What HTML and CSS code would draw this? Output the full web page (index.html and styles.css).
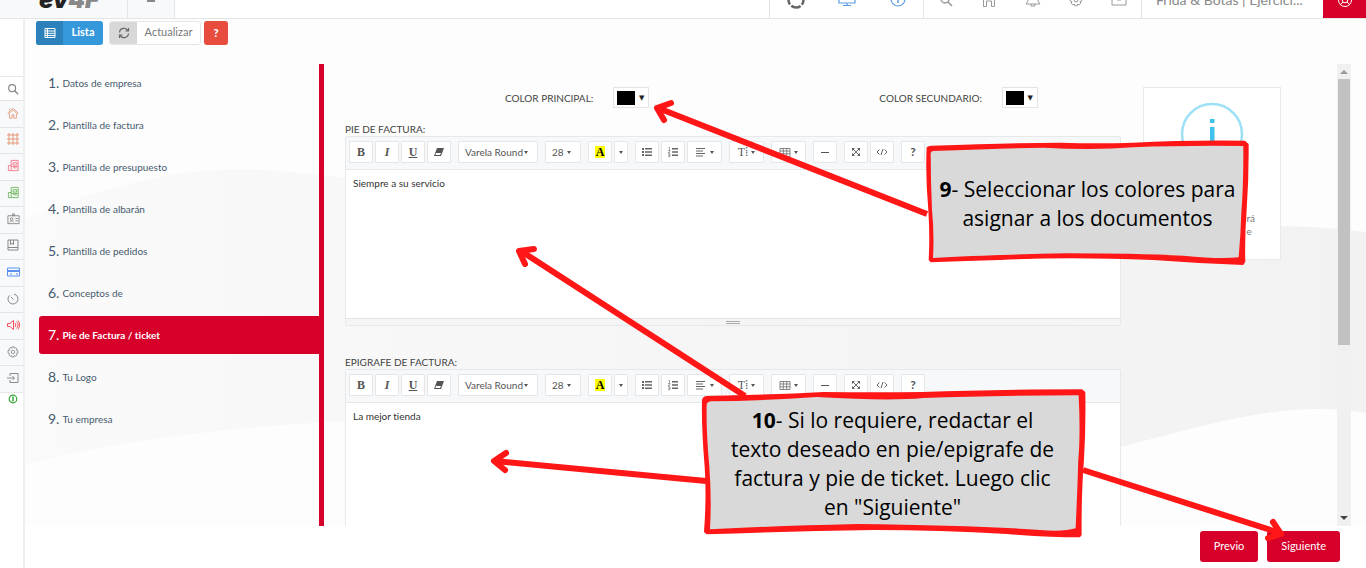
FILE: index.html
```html
<!DOCTYPE html>
<html lang="es">
<head>
<meta charset="utf-8">
<title>Configuración de documentos</title>
<link rel="stylesheet" href="styles.css">
</head>
<body>
<svg width="0" height="0" class="sprite" aria-hidden="true">
  <symbol id="eraser" viewBox="0 0 12 12"><path d="M4 2h7L8 10H1z" fill="#555"/><path d="M3 7h5l-1 2H2.400z" fill="#fff"/></symbol>
  <symbol id="ul" viewBox="0 0 12 12"><path d="M1 2h2v2H1zM1 5h2v2H1zM1 8h2v2H1zM4 2h7v1.500H4zM4 5.200h7v1.500H4zM4 8.400h7v1.500H4z" fill="#666"/></symbol>
  <symbol id="ol" viewBox="0 0 12 12"><path d="M5 2h6v1.500H5zM5 5.200h6v1.500H5zM5 8.400h6v1.500H5z" fill="#666"/><path d="M1.500 1.500h1v2.500M1 4.500h2v1l-2 1.500h2M1 8h2v1.300H1.500M3 9.300v1.400H1" fill="none" stroke="#777" stroke-width=".7"/></symbol>
  <symbol id="align" viewBox="0 0 12 12"><path d="M1 2.500h9M1 5h7M1 7.500h9M1 10h7" stroke="#666" stroke-width="1.200"/></symbol>
  <symbol id="grid" viewBox="0 0 12 12"><path d="M1 2.500h10v8H1zM1 5h10M1 7.800h10M4.300 2.500v8M7.700 2.500v8" fill="none" stroke="#777" stroke-width=".9"/></symbol>
  <symbol id="full" viewBox="0 0 12 12"><path d="M3 3l6 6M9 3L3 9" stroke="#666"/><path d="M2 2h3L2 5zM10 2v3L7 2zM2 10V7l3 3zM10 10H7l3-3z" fill="#666"/></symbol>
  <symbol id="code" viewBox="0 0 14 12"><path d="M4.500 3.500L2 6l2.500 2.500M9.500 3.500L12 6 9.500 8.500M8 3L6 9" fill="none" stroke="#666"/></symbol>
  <symbol id="gear" viewBox="0 0 14 14"><path d="M5.800 1h2.400l.4 1.700 1.500-.9 1.700 1.700-.9 1.500 1.800.5v2.700l-1.800.5.9 1.600-1.700 1.600-1.500-.9-.4 1.800H5.800l-.5-1.800-1.500.9-1.700-1.600.9-1.600L1.200 8V5.500L3 5l-.9-1.500 1.700-1.700 1.500.9z" fill="none" stroke="currentColor"/><circle cx="7" cy="6.900" r="2" fill="none" stroke="currentColor"/></symbol>
  <symbol id="doc" viewBox="0 0 14 14"><path d="M4.500 1.500h7.500v11H1.500V7h3zM4.500 7v5.500M6.500 4h4v2.500h-4zM6.500 9.500h4M4.500 8h7.500" fill="none" stroke="currentColor"/></symbol>
  <symbol id="search" viewBox="0 0 14 14"><circle cx="6" cy="6" r="4" fill="none" stroke="currentColor" stroke-width="1.400"/><path d="M9 9l4 4" stroke="currentColor" stroke-width="1.600"/></symbol>
  <symbol id="home" viewBox="0 0 14 14"><path d="M1 7l6-5.500L13 7l-1 1-5-4.600L2 8zM3 8v5h3V9h2v4h3V8M3 4V2" fill="none" stroke="currentColor"/></symbol>
</svg>

<header class="topbar">
  <a class="brand" href="#"><span>ev</span><span class="brand-light">4F</span></a>
  <button class="burger" aria-label="Menú"><i></i></button>
  <div class="tools tools-a">
    <a href="#" aria-label="Estado"><svg viewBox="0 0 20 20" width="20" height="20"><circle cx="10" cy="10" r="7.500" fill="none" stroke="#666" stroke-width="2.500" stroke-dasharray="10 1.780" stroke-dashoffset="5"/></svg></a>
    <a href="#" aria-label="Pantalla"><svg viewBox="0 0 18 18" width="18" height="18"><path d="M1 2h16v10H1zM9 12v2M5 14.500h8" fill="none" stroke="#5a9be6" stroke-width="1.200"/></svg></a>
    <a href="#" aria-label="Información"><svg viewBox="0 0 18 18" width="18" height="18"><circle cx="9" cy="8" r="7" fill="none" stroke="#5a9be6" stroke-width="1.200"/><path d="M9 4v8" stroke="#5a9be6" stroke-width="1.500"/></svg></a>
  </div>
  <div class="tools tools-b">
    <a href="#" aria-label="Buscar"><svg width="14" height="14"><use href="#search"/></svg></a>
    <a href="#" aria-label="Inicio"><svg viewBox="0 0 14 14" width="14" height="14"><path d="M1.500 6L7 1l5.500 5v7.500h-3V8h-5v5.500h-3z" fill="none" stroke="currentColor"/></svg></a>
    <a href="#" aria-label="Avisos"><svg viewBox="0 0 16 16" width="16" height="16"><path d="M1 12h14l-2-3V5a5 5 0 0 0-10 0v4zM6 12v2h4v-2" fill="none" stroke="currentColor"/></svg></a>
    <a href="#" aria-label="Ajustes"><svg width="14" height="14"><use href="#gear"/></svg></a>
    <a href="#" aria-label="Archivo"><svg viewBox="0 0 16 14" width="16" height="14"><path d="M1 1h14v11H1zM1 4h14M6 7h4" fill="none" stroke="currentColor"/></svg></a>
  </div>
  <a class="account" href="#">Frida &amp; Botas | Ejercici...</a>
  <button class="help" aria-label="Soporte"><svg viewBox="0 0 16 16" width="16" height="16"><g fill="none" stroke="#fff"><circle cx="8" cy="8" r="6.500"/><circle cx="8" cy="8" r="2.800"/><path d="M3.400 3.400L6 6M12.600 3.400L10 6M3.400 12.600L6 10M12.600 12.600L10 10"/></g></svg></button>
</header>

<div class="frame">
  <nav class="rail" aria-label="Secciones">
    <a class="rail-search" href="#" aria-label="Buscar"><svg width="12" height="12"><use href="#search"/></svg></a>
    <div class="rail-list">
      <a class="orange" href="#" aria-label="Inicio"><svg width="12" height="12"><use href="#home"/></svg></a>
      <a class="orange" href="#" aria-label="Módulos"><svg viewBox="0 0 12 12" width="12" height="12"><g fill="none" stroke="currentColor"><path d="M1 1h2v2H1zM5 1h2v2H5zM9 1h2v2H9zM1 5h2v2H1zM5 5h2v2H5zM9 5h2v2H9zM1 9h2v2H1zM5 9h2v2H5zM9 9h2v2H9z"/></g></svg></a>
      <a class="pink" href="#" aria-label="Compras"><svg width="13" height="13"><use href="#doc"/></svg></a>
      <a class="green" href="#" aria-label="Ventas"><svg width="13" height="13"><use href="#doc"/></svg></a>
      <a href="#" aria-label="Contactos"><svg viewBox="0 0 14 12" width="13" height="12"><path d="M1 2.500h12v8.500H1zM6 .5h2v2H6zM9 5.500h3M9 8h3M3 9.500c0-2 4-2 4 0" fill="none" stroke="currentColor"/><circle cx="5" cy="6" r="1.400" fill="none" stroke="currentColor"/></svg></a>
      <a href="#" aria-label="Libros"><svg viewBox="0 0 12 12" width="12" height="12"><path d="M1 1h10v10H1zM1 8.500h10M3.500 1v4.500L5 4.300l1.500 1.200V1" fill="none" stroke="currentColor"/></svg></a>
      <a class="blue" href="#" aria-label="Banco"><svg viewBox="0 0 13 10" width="13" height="10"><path d="M.5 1h12v8H.5zM3 7h2M9 7h2" fill="none" stroke="currentColor"/><path d="M.5 3h12v2H.5z" fill="currentColor"/></svg></a>
      <a href="#" aria-label="Tiempo"><svg viewBox="0 0 12 12" width="12" height="12"><path d="M7 1.100A5 5 0 1 1 2.500 2.400M6.500 6.500L4 4" fill="none" stroke="currentColor"/></svg></a>
      <a class="red" href="#" aria-label="Campañas"><svg viewBox="0 0 13 12" width="13" height="12"><path d="M.5 4.500H3l3.500-3v9L3 7.500H.5zM8 4c1 1 1 3 0 4M9.500 2.500c2 2 2 5 0 7M11 1.500c2 3 2 6 0 9" fill="none" stroke="currentColor"/></svg></a>
      <a href="#" aria-label="Ajustes"><svg width="12" height="12"><use href="#gear"/></svg></a>
      <a href="#" aria-label="Salir"><svg viewBox="0 0 12 12" width="12" height="12"><path d="M3 4V1.500h8v9H3V8M0 6h7M5.500 4l2 2-2 2" fill="none" stroke="currentColor"/></svg></a>
    </div>
    <a class="rail-power" href="#" aria-label="Estado"><svg viewBox="0 0 10 10" width="10" height="10"><circle cx="5" cy="5" r="3.800" fill="none" stroke="#36a336" stroke-width="1.200"/><path d="M5 2.500v5" stroke="#36a336" stroke-width="1.400"/></svg></a>
  </nav>

  <div class="page">
    <svg class="waves" viewBox="25 19 1341 549" preserveAspectRatio="none" aria-hidden="true">
      <defs><linearGradient id="wave"><stop offset="0" stop-color="#fafafa"/><stop offset=".3" stop-color="#f7f7f7"/><stop offset="1" stop-color="#f2f2f2"/></linearGradient></defs>
      <path d="M25 219C100 188 170 169 245 169C560 182 800 340 1120 247C1200 224 1290 222 1366 232V413C1290 401 1230 418 1121 447C900 510 600 400 345 421C220 428 120 440 25 465z" fill="url(#wave)"/>
    </svg>
    <div class="actions">
      <button class="action action-blue"><span class="action-icon"><svg viewBox="0 0 12 12" width="12" height="12"><path d="M1 1.500h10v9H1zM1 4h10M1 6.300h10M1 8.500h10M3.500 1.500v9" fill="none" stroke="#fff"/></svg></span><span class="action-text">Lista</span></button>
      <button class="action action-light"><span class="action-icon"><svg viewBox="0 0 12 12" width="12" height="12"><path d="M1.500 5.500a4.500 4.500 0 0 1 8.500-1.700M10.500 1v3h-3M10.500 6.500a4.500 4.500 0 0 1-8.500 1.700M1.500 11V8h3" fill="none" stroke="#666" stroke-width="1.200"/></svg></span><span class="action-text">Actualizar</span></button>
      <button class="action action-help">?</button>
    </div>

    <div class="wizard">
      <ol class="steps">
        <li><a href="#"><b>1.</b> Datos de empresa</a></li>
        <li><a href="#"><b>2.</b> Plantilla de factura</a></li>
        <li><a href="#"><b>3.</b> Plantilla de presupuesto</a></li>
        <li><a href="#"><b>4.</b> Plantilla de albarán</a></li>
        <li><a href="#"><b>5.</b> Plantilla de pedidos</a></li>
        <li><a href="#"><b>6.</b> Conceptos de</a></li>
        <li><a class="current" href="#" aria-current="step"><b>7.</b> Pie de Factura / ticket</a></li>
        <li><a href="#"><b>8.</b> Tu Logo</a></li>
        <li><a href="#"><b>9.</b> Tu empresa</a></li>
      </ol>
      <main class="pane">
        <div class="form">
          <div class="colors">
            <div class="color-field"><label for="c1">COLOR PRINCIPAL:</label><button class="picker" id="c1"><i class="swatch"></i><span>▼</span></button></div>
            <div class="color-field"><label for="c2">COLOR SECUNDARIO:</label><button class="picker" id="c2"><i class="swatch"></i><span>▼</span></button></div>
          </div>
          <section class="field">
            <label for="pie">PIE DE FACTURA:</label>
            <div class="editor">
              <div class="toolbar">
                <div class="group"><button class="serif bold">B</button><button class="serif bold italic">I</button><button class="serif bold under">U</button><button aria-label="Borrar formato"><svg width="12" height="12"><use href="#eraser"/></svg></button></div>
                <div class="pick pick-font"><select aria-label="Fuente"><option>Varela Round</option></select></div>
                <div class="pick pick-size"><select aria-label="Tamaño"><option>28</option></select></div>
                <div class="group"><button class="serif bold"><mark>A</mark></button><button class="narrow" aria-label="Más colores"><i class="caret"></i></button></div>
                <div class="group"><button aria-label="Lista"><svg width="12" height="12"><use href="#ul"/></svg></button><button aria-label="Lista numerada"><svg width="12" height="12"><use href="#ol"/></svg></button><button class="wide" aria-label="Alinear"><svg width="12" height="12"><use href="#align"/></svg><i class="caret"></i></button></div>
                <div class="group"><button class="wide serif">T⁞<i class="caret"></i></button></div>
                <div class="group"><button class="wide" aria-label="Tabla"><svg width="12" height="12"><use href="#grid"/></svg><i class="caret"></i></button></div>
                <div class="group"><button aria-label="Línea"><i class="dash"></i></button></div>
                <div class="group"><button aria-label="Pantalla completa"><svg width="12" height="12"><use href="#full"/></svg></button><button aria-label="Código"><svg width="14" height="12"><use href="#code"/></svg></button></div>
                <div class="group"><button class="question">?</button></div>
              </div>
              <textarea id="pie">Siempre a su servicio</textarea>
              <div class="resize"><i></i></div>
            </div>
          </section>
          <section class="field">
            <label for="epi">EPIGRAFE DE FACTURA:</label>
            <div class="editor">
              <div class="toolbar">
                <div class="group"><button class="serif bold">B</button><button class="serif bold italic">I</button><button class="serif bold under">U</button><button aria-label="Borrar formato"><svg width="12" height="12"><use href="#eraser"/></svg></button></div>
                <div class="pick pick-font"><select aria-label="Fuente"><option>Varela Round</option></select></div>
                <div class="pick pick-size"><select aria-label="Tamaño"><option>28</option></select></div>
                <div class="group"><button class="serif bold"><mark>A</mark></button><button class="narrow" aria-label="Más colores"><i class="caret"></i></button></div>
                <div class="group"><button aria-label="Lista"><svg width="12" height="12"><use href="#ul"/></svg></button><button aria-label="Lista numerada"><svg width="12" height="12"><use href="#ol"/></svg></button><button class="wide" aria-label="Alinear"><svg width="12" height="12"><use href="#align"/></svg><i class="caret"></i></button></div>
                <div class="group"><button class="wide serif">T⁞<i class="caret"></i></button></div>
                <div class="group"><button class="wide" aria-label="Tabla"><svg width="12" height="12"><use href="#grid"/></svg><i class="caret"></i></button></div>
                <div class="group"><button aria-label="Línea"><i class="dash"></i></button></div>
                <div class="group"><button aria-label="Pantalla completa"><svg width="12" height="12"><use href="#full"/></svg></button><button aria-label="Código"><svg width="14" height="12"><use href="#code"/></svg></button></div>
                <div class="group"><button class="question">?</button></div>
              </div>
              <textarea id="epi">La mejor tienda</textarea>
            </div>
          </section>
        </div>
        <aside class="info">
          <svg viewBox="0 0 64 64" width="64" height="64" aria-hidden="true"><circle cx="32" cy="32" r="30" fill="none" stroke="#9de0f6" stroke-width="2.500"/><path d="M30 17h4.500v4H30zM30 25h4.500v22H30z" fill="#3fc3ee"/></svg>
          <p>rá<br>e</p>
        </aside>
      </main>
      <div class="scroll" aria-hidden="true"><i class="up"></i><i class="thumb"></i><i class="down"></i></div>
    </div>

    <footer class="pager"><button>Previo</button><button>Siguiente</button></footer>
  </div>
</div>

<svg class="notes" viewBox="0 0 1366 568" width="1366" height="568" aria-hidden="true">
  <g fill="none" stroke="#ff1616" stroke-width="6">
    <path d="M927 214L658 108"/><path d="M745 396L521 251"/><path d="M706 481L495 461"/><path d="M1083 470L1280 533"/>
    <g stroke-linecap="round" stroke-linejoin="round"><path d="M671 103L657 108L664 120"/><path d="M534 249L519 251L525 264"/><path d="M506 453L494 461L505 470"/><path d="M1273 522L1281 534L1268 538"/></g>
  </g>
  <g transform="translate(900 70) scale(.3333)">
    <path d="M80 232Q84 227 95 227Q350 218 480 218Q600 222 700 218Q850 210 1035 212L1046 222Q1047 320 1040 420Q1034 500 1036 575L1030 585Q900 580 760 570Q500 560 300 570Q200 573 92 577L86 570Q90 500 85 420Q76 320 80 232z" fill="#ff1616"/>
    <path d="M92 248L98 243Q300 236 430 233Q580 242 700 232Q850 226 1030 228Q1031 340 1024 430Q1022 500 1016 562Q960 568 850 557Q700 550 500 550Q250 555 99 564Q103 490 96 420Q92 330 92 248z" fill="#d9d9d9"/>
  </g>
  <g transform="translate(690 350) scale(.3333)">
    <path d="M36 150Q38 140 50 138Q250 134 400 126Q550 128 700 126Q900 118 1176 118L1186 126Q1188 230 1182 330Q1174 430 1175 555L1170 562Q1080 562 950 552Q750 540 550 540Q300 544 50 553L42 546Q50 440 44 350Q34 230 36 150z" fill="#ff1616"/>
    <path d="M50 162Q52 156 62 154Q220 152 380 141Q600 154 700 144Q900 136 1166 136Q1172 250 1165 330Q1162 430 1157 535Q1120 546 1050 540Q850 526 500 522Q250 528 60 538Q65 440 58 350Q48 240 50 162z" fill="#d9d9d9"/>
  </g>
</svg>
<p class="note note-colors"><strong>9</strong>- Seleccionar los colores para<br>asignar a los documentos</p>
<p class="note note-texts"><strong>10</strong>- Si lo requiere, redactar el<br>texto deseado en pie/epigrafe de<br>factura y pie de ticket. Luego clic<br>en "Siguiente"</p>
</body>
</html>
```
FILE: styles.css
```css
* { box-sizing: border-box; }
body {
  margin: 0;
  height: 100vh;
  overflow: hidden;
  position: relative;
  display: flex;
  flex-direction: column;
  background: #fff;
  color: #555;
  font: 10px/14px Lato, sans-serif;
  font-variant-ligatures: none;
}
a { color: inherit; text-decoration: none; }
button, select, textarea { font: inherit; color: inherit; margin: 0; }
button { cursor: pointer; padding: 0; border: 0; background: none; }
svg { display: block; }
.sprite { position: absolute; }

.topbar {
  flex: none;
  display: flex;
  align-items: flex-end;
  height: 19px;
  overflow: hidden;
  border-bottom: 1px solid #e2e4e6;
}
.topbar > * { flex: none; height: 36px; display: flex; align-items: center; }
.brand {
  width: 128px;
  padding-left: 39px;
  background: #f8f9fb;
  border-right: 1px solid #e2e4e6;
  font: italic 900 24px/36px Inter, sans-serif;
  color: #222;
}
.brand-light { color: #888; }
.burger { width: 47px; justify-content: center; background: #f8f9fb; border-right: 1px solid #e2e4e6; }
.burger i { width: 8px; height: 3px; background: #888; }
.tools { color: #999; border-left: 1px solid #e2e4e6; }
.tools a { flex: 1; display: flex; justify-content: center; }
.tools-a { width: 154px; margin-left: auto; }
.tools-b { width: 218px; }
.account { width: 182px; padding-left: 14px; border-left: 1px solid #e2e4e6; font-size: 14px; color: #888; white-space: nowrap; }
.help { width: 43px; justify-content: center; background: #d6002b; }

.frame { flex: 1; min-height: 0; display: flex; }
.rail { flex: none; width: 25px; padding-top: 57px; border-right: 2px solid #eeeff1; color: #888; background: #fff; }
.rail a { display: flex; align-items: center; justify-content: center; padding-left: 3px; }
.rail-search { height: 24px; border-top: 1px solid #e5e7e9; }
.rail-list { display: grid; grid-auto-rows: 1fr; height: 293px; background: #f8f9fb; border-bottom: 1px solid #e5e7e9; }
.rail-list a { border-top: 1px solid #e2e4e7; padding-bottom: 2px; }
.rail-power { height: 12px; }
.orange { color: #e39a78; }
.pink { color: #f77a8c; }
.green { color: #6fb95f; }
.blue { color: #5b93f5; }
.red { color: #f5505e; }

.page { position: relative; flex: 1; min-width: 0; display: flex; flex-direction: column; background: #fdfdfd; }
.waves { position: absolute; inset: 0; width: 100%; height: 100%; }
.page > div, .page > footer { position: relative; }

.actions { flex: none; display: flex; height: 45px; padding: 2px 11px 19px; }
.action { display: flex; height: 24px; border-radius: 3px; overflow: hidden; font-size: 11px; }
.action-icon { display: flex; align-items: center; justify-content: center; width: 27px; height: 23px; }
.action-text { flex: 1; line-height: 22px; text-align: center; }
.action-blue { width: 67px; background: #3498db; color: #fff; font-weight: 700; margin-right: 6px; }
.action-blue .action-icon { height: 24px; background: #2c81ba; }
.action-light { width: 92px; border: 1px solid #e6e6e6; background: #fff; color: #777; margin-right: 3px; }
.action-light .action-icon { height: 22px; background: #d8d8d8; }
.action-light .action-text { line-height: 20px; }
.action-help { width: 24px; align-items: center; justify-content: center; background: #e74c3c; color: #fff; font-weight: 900; }

.wizard { flex: 1; min-height: 0; display: flex; padding-right: 15px; }
.steps { flex: none; width: 299px; margin: 0; padding: 0 0 0 14px; border-right: 5px solid #d6002b; list-style: none; }
.steps li { height: 38px; margin-bottom: 4px; }
.steps a { display: flex; align-items: center; gap: 3px; height: 38px; padding-left: 9px; color: #465a6e; border-radius: 3px 0 0 3px; }
.steps b { font-size: 14px; font-weight: 400; }
.steps .current { background: #d6002b; color: #fff; font-weight: 700; }

.pane { flex: 1; min-width: 0; display: flex; align-items: flex-start; padding: 23px 56px 0 21px; overflow: hidden; }
.form { flex: 1; min-width: 0; margin-right: 22px; }
.colors { display: flex; justify-content: space-between; height: 35px; padding: 0 83px 0 160px; }
.color-field { display: flex; align-items: flex-start; gap: 20px; }
.color-field label { line-height: 22px; }
.picker { display: flex; align-items: center; justify-content: space-between; width: 36px; height: 21px; padding: 0 4px 0 3px; border: 1px solid #e4e4e4; background: #fff; color: #222; font: 7px "DejaVu Sans", sans-serif; }
.swatch { width: 18px; height: 14px; background: #000; }
label { color: #444; }
.field { margin-bottom: 29px; }
.field > label { display: block; }
.editor { border: 1px solid #e6e8ea; border-radius: 2px; background: #fff; }
.toolbar { display: flex; gap: 7px; height: 33px; padding: 4px 3px; background: #f6f8fa; border-bottom: 1px solid #e6e8ea; }
.group { display: flex; gap: 2px; }
.toolbar button, .pick { display: flex; align-items: center; justify-content: center; width: 24px; height: 22px; border: 1px solid #e4e6e8; border-radius: 1px; background: #fff; color: #555; }
.toolbar .narrow { width: 14px; }
.toolbar .wide { width: 35px; gap: 3px; }
.pick { position: relative; }
.pick-font { width: 80px; }
.pick-size { width: 36px; }
.pick select { appearance: none; width: 100%; height: 20px; padding: 0 0 0 6px; border: 0; background: none; }
.caret, .pick::after { border: 2px solid transparent; border-top: 3px solid #555; border-bottom: 0; }
.pick::after { content: ""; position: absolute; right: 9px; top: 9px; }
.serif { font: 12px "Liberation Serif", serif; }
.bold { font-weight: 700; }
.italic { font-style: italic; }
.under { text-decoration: underline; }
mark { padding: 0 1px; background: #ff0; color: #000; line-height: 12px; }
.dash { width: 8px; height: 1px; background: #555; }
.toolbar .question { font-size: 12px; font-weight: 700; }
textarea { display: block; width: 100%; height: 148px; padding: 6px 7px; border: 0; resize: none; outline: 0; background: #fff; color: #333; }
.resize { display: flex; justify-content: center; align-items: center; height: 7px; background: #f5f5f5; border-top: 1px solid #e2e2e2; }
.resize i { width: 14px; height: 3px; border: 1px solid #aaa; border-width: 1px 0; }

.info { flex: none; display: flex; flex-direction: column; align-items: center; width: 138px; height: 173px; padding: 14px 25px 0; border: 1px solid #e9e9e9; background: #fff; }
.info p { align-self: flex-end; margin: 46px 0 0; line-height: 13px; color: #777; }

.scroll { flex: none; display: flex; flex-direction: column; align-items: center; width: 14px; background: #f0f0f0; }
.up, .down { border: 4px solid transparent; }
.up { border-top: 0; border-bottom-color: #999; margin: 6px 0 5px; }
.thumb { width: 12px; height: 266px; background: #c1c1c1; }
.down { border-bottom: 0; border-top-color: #444; margin: auto 0 6px; }

.pager { flex: none; display: flex; justify-content: flex-end; gap: 9px; height: 42px; padding: 5px 26px 6px 0; background: #fff; }
.pager button { padding: 0 14px 2px; border-radius: 3px; background: #d6002b; color: #fff; font-size: 11px; }

.notes { position: absolute; left: 0; top: 0; pointer-events: none; }
.note { position: absolute; margin: 0; color: #000; font: 21px/29px "Open Sans", sans-serif; text-align: center; white-space: nowrap; }
.note-colors { left: 927px; top: 175px; width: 321px; }
.note-texts { left: 702px; top: 406px; width: 381px; }
```
